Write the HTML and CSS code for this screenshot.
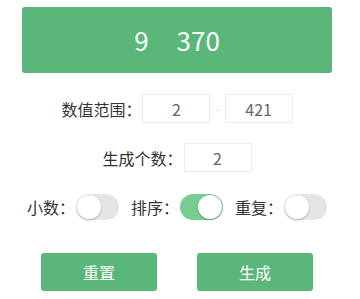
FILE: index.html
```html
<!DOCTYPE html>
<html lang="zh">
<head>
<meta charset="utf-8">
<link rel="stylesheet" href="styles.css">
</head>
<body>
<div class="wrap">
  <div class="banner"><span class="num">9</span><span class="num">370</span></div>
  <div class="row r1">
    <span class="label">数值范围：</span>
    <div class="box">2</div>
    <span class="dash">-</span>
    <div class="box">421</div>
  </div>
  <div class="row r2">
    <span class="label">生成个数：</span>
    <div class="box">2</div>
  </div>
  <div class="row r3">
    <span class="label">小数：</span>
    <span class="toggle"><span class="knob"></span></span>
    <span class="label">排序：</span>
    <span class="toggle on"><span class="knob"></span></span>
    <span class="label">重复：</span>
    <span class="toggle"><span class="knob"></span></span>
  </div>
  <div class="row btns">
    <div class="btn">重置</div>
    <div class="btn">生成</div>
  </div>
</div>
</body>
</html>
```
FILE: styles.css
```css
html, body {
  margin: 0;
  padding: 0;
  background: #fff;
}
body {
  font-family: "Noto Sans CJK SC", "Noto Sans", sans-serif;
  color: #333;
}
.wrap {
  width: 310px;
  margin-left: 22px;
  padding-top: 7px;
}
.banner {
  height: 66px;
  background: #5ab679;
  border-radius: 3px;
  display: flex;
  align-items: center;
  justify-content: center;
  gap: 28px;
  color: #fff;
  font-size: 26px;
}
.num {
  line-height: 1;
}
.row {
  display: flex;
  align-items: center;
  justify-content: center;
}
.label {
  font-size: 16px;
  line-height: 1;
  color: #333;
}
.r1 {
  margin-top: 21px;
  height: 29px;
}
.r2 {
  margin-top: 20px;
  height: 29px;
}
.box {
  box-sizing: border-box;
  width: 68px;
  height: 29px;
  border: 1px solid #ececec;
  display: flex;
  align-items: center;
  justify-content: center;
  font-size: 16px;
  color: #666;
  margin-left: 1px;
}
.dash {
  color: #ddd;
  font-size: 12px;
  margin-left: 5px;
  margin-right: 4px;
}
.r3 {
  margin-top: 22px;
  height: 26px;
}
.r3 .label {
  margin-left: 12px;
}
.r3 .label:first-child {
  margin-left: 0;
}
.toggle {
  box-sizing: border-box;
  width: 43px;
  height: 26px;
  border-radius: 13px;
  background: #e5e5e5;
  margin-left: 1px;
  position: relative;
  display: block;
}
.toggle .knob {
  position: absolute;
  left: 1px;
  top: 1px;
  width: 24px;
  height: 24px;
  border-radius: 50%;
  background: #fff;
  box-shadow: 0 1px 2px rgba(0,0,0,0.25);
}
.toggle.on {
  background: #78cc92;
}
.toggle.on .knob {
  left: 18px;
}
.btns {
  margin-top: 33px;
  gap: 40px;
}
.btn {
  width: 116px;
  height: 38px;
  border-radius: 3px;
  background: #5ab679;
  color: #fff;
  font-size: 16px;
  display: flex;
  align-items: center;
  justify-content: center;
}
```
